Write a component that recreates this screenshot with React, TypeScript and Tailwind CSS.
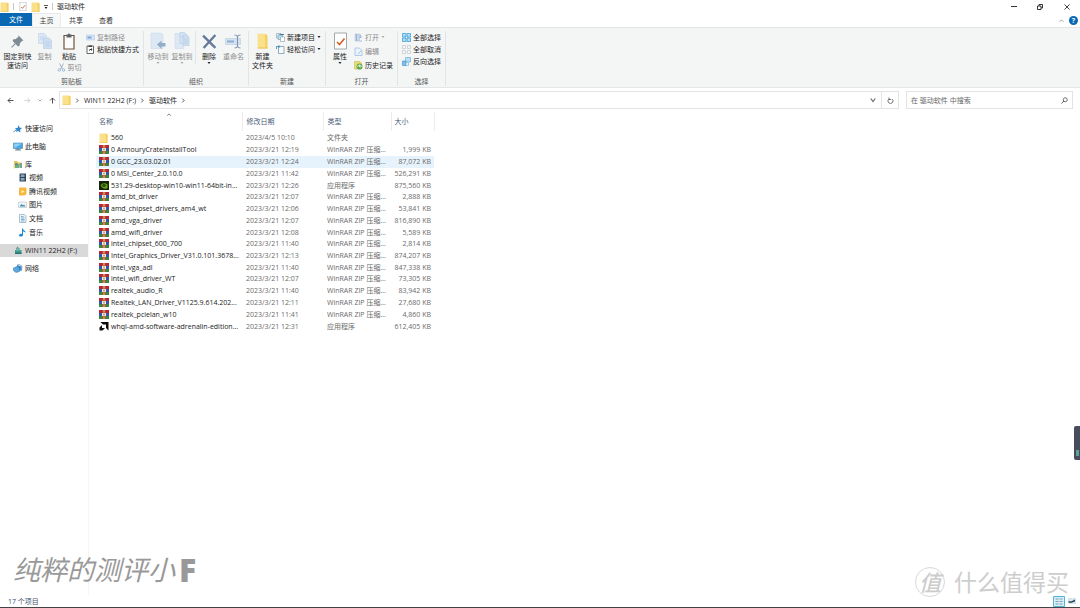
import React from "react";

type Kind = "folder" | "rar" | "nvidia" | "amd";
type FileRow = { name: string; date: string; type: string; size: string; kind: Kind };

const ZIP = "WinRAR ZIP 压缩...";
const rar = (name: string, time: string, size: string): FileRow => ({
  name,
  date: `2023/3/21 ${time}`,
  type: ZIP,
  size: `${size} KB`,
  kind: "rar",
});

const files: FileRow[] = [
  { name: "560", date: "2023/4/5 10:10", type: "文件夹", size: "", kind: "folder" },
  rar("0 ArmouryCrateInstallTool", "12:19", "1,999"),
  rar("0 GCC_23.03.02.01", "12:24", "87,072"),
  rar("0 MSI_Center_2.0.10.0", "11:42", "526,291"),
  { name: "531.29-desktop-win10-win11-64bit-in...", date: "2023/3/21 12:26", type: "应用程序", size: "875,560 KB", kind: "nvidia" },
  rar("amd_bt_driver", "12:07", "2,888"),
  rar("amd_chipset_drivers_am4_wt", "12:06", "53,841"),
  rar("amd_vga_driver", "12:07", "816,890"),
  rar("amd_wifi_driver", "12:08", "5,589"),
  rar("intel_chipset_600_700", "11:40", "2,814"),
  rar("Intel_Graphics_Driver_V31.0.101.3678...", "12:13", "874,207"),
  rar("intel_vga_adl", "11:40", "847,338"),
  rar("intel_wifi_driver_WT", "12:07", "73,305"),
  rar("realtek_audio_R", "11:40", "83,942"),
  rar("Realtek_LAN_Driver_V1125.9.614.202...", "12:11", "27,680"),
  rar("realtek_pcielan_w10", "11:41", "4,860"),
  { name: "whql-amd-software-adrenalin-edition...", date: "2023/3/21 12:31", type: "应用程序", size: "612,405 KB", kind: "amd" },
];

function FolderIcon({ className = "h-[10px] w-[9px]" }: { className?: string }) {
  return (
    <svg viewBox="0 0 18 20" className={`shrink-0 ${className}`} preserveAspectRatio="none">
      <path d="M1 1h12l4 2v16H1z" fill="#fbe08a" />
      <path d="M13 1l4 2v16h-3z" fill="#f3cf62" />
      <path d="M1 18h16v1.5H1z" fill="#efc75a" />
    </svg>
  );
}

function RarIcon() {
  return (
    <svg viewBox="0 0 20 18" className="h-[9px] w-[10px] shrink-0">
      <path d="M0 0h20v6H0z" fill="#b4273b" />
      <path d="M0 6h20v6H0z" fill="#3157a8" />
      <path d="M0 12h20v6H0z" fill="#37863f" />
      <path d="M7 0h6v18H7z" fill="#c4523f" />
      <path d="M6 6h8v6H6z" fill="#f7e9d8" />
      <path d="M9 7h2v4H9z" fill="#9d6b50" />
      <path d="M9 0h2v5H9zM9 13h2v5H9z" fill="#e3b860" />
    </svg>
  );
}

function NvidiaIcon() {
  return (
    <svg viewBox="0 0 20 18" className="h-[9px] w-[10px] shrink-0">
      <path d="M0 0h20v18H0z" fill="#17240c" />
      <path d="M3 9c3-5 9-6 14-2v7c-5 3-11 1-14-5z" fill="#67a714" />
      <path d="M6 9c2-3 5-3 8 0-2 3-5 3-8 0z" fill="none" stroke="#17240c" strokeWidth="1.5" />
      <circle cx="10" cy="9" r="1.4" fill="#17240c" />
    </svg>
  );
}

function AmdIcon() {
  return (
    <svg viewBox="0 0 20 18" className="h-[9px] w-[10px] shrink-0">
      <path d="M3 0h16v17l-5-5V5H8z" fill="#0b0b0b" />
      <path d="M1 11l5-5v6h6l-5 5H1z" fill="#0b0b0b" />
    </svg>
  );
}

function FileIcon({ kind }: { kind: Kind }) {
  if (kind === "folder") return <FolderIcon />;
  if (kind === "rar") return <RarIcon />;
  if (kind === "nvidia") return <NvidiaIcon />;
  return <AmdIcon />;
}

function Caret({ color = "#222" }: { color?: string }) {
  return (
    <svg viewBox="0 0 6 4" className="h-[2px] w-[4px] shrink-0">
      <path d="M0 0h6L3 4z" fill={color} />
    </svg>
  );
}

function Chevron({ className = "h-[5px] w-[5px]", d = "M2 1l3 3-3 3", color = "#444" }: { className?: string; d?: string; color?: string }) {
  return (
    <svg viewBox="0 0 8 8" className={`shrink-0 ${className}`}>
      <path d={d} fill="none" stroke={color} strokeWidth="1.5" />
    </svg>
  );
}

function PinIcon() {
  return (
    <svg viewBox="0 0 24 24" className="h-[13px] w-[13px]">
      <path d="M14 1l9 9-3 1-4 5 0 4-3 1-10-10 1-3 4 0 5-4z" fill="#7e8a94" />
      <path d="M8 16l-7 7" stroke="#7e8a94" strokeWidth="2" />
    </svg>
  );
}

function CopyIcon() {
  return (
    <svg viewBox="0 0 28 32" className="h-[16px] w-[14px]">
      <path d="M1 1h11l5 5v15H1z" fill="#dbe7f5" stroke="#b3c9e2" />
      <path d="M11 10h11l5 5v16H11z" fill="#cfdff1" stroke="#a9c2df" />
      <path d="M4 8h9M4 12h6M14 18h10M14 22h10M14 26h10" stroke="#aac3e0" />
    </svg>
  );
}

function PasteIcon() {
  return (
    <svg viewBox="0 0 24 34" className="h-[17px] w-[12px]">
      <path d="M2 5h20v27H2z" fill="#fbfbfb" stroke="#6f5137" strokeWidth="2.4" />
      <path d="M7 3h3c0-3 4-3 4 0h3v6H7z" fill="#59626c" />
    </svg>
  );
}

function MoveIcon() {
  return (
    <svg viewBox="0 0 32 36" className="h-[18px] w-[16px]">
      <path d="M2 2h19l5 3v28H2z" fill="#dce8f4" stroke="#c4d5e6" />
      <path d="M14 25l9-8v5h8v7h-8v5z" fill="#93adc9" />
    </svg>
  );
}

function CopyToIcon() {
  return (
    <svg viewBox="0 0 32 36" className="h-[18px] w-[16px]">
      <path d="M2 3h17v30H2z" fill="#dce8f4" stroke="#c4d5e6" />
      <path d="M12 1h9l4 4v18H12z" fill="#d6e4f3" stroke="#a9c2df" />
      <path d="M18 6h8l4 4v17H18z" fill="#d0dff0" stroke="#a9c2df" />
      <path d="M20 14h8M20 18h8M20 22h8M14 10h4" stroke="#a9c2df" />
    </svg>
  );
}

function DeleteIcon() {
  return (
    <svg viewBox="0 0 28 28" className="h-[15px] w-[15px]">
      <path d="M2 3l23 23M25 2L3 26" stroke="#65799a" strokeWidth="4.4" />
    </svg>
  );
}

function RenameIcon() {
  return (
    <svg viewBox="0 0 34 30" className="h-[15px] w-[17px]">
      <path d="M1 9h30v12H1z" fill="#d5e2f0" stroke="#b0c5dc" />
      <path d="M4 13h14v4H4z" fill="#8fadd0" />
      <path d="M19 2c3 0 5 1 6 3 1-2 3-3 6-3M25 5v20M19 28c3 0 5-1 6-3 1 2 3 3 6 3" fill="none" stroke="#7f97b3" strokeWidth="2.4" />
    </svg>
  );
}

function CheckPage({ className = "h-[18px] w-[13px]" }: { className?: string }) {
  return (
    <svg viewBox="0 0 26 34" className={className}>
      <path d="M1 1h24v32H1z" fill="#fff" stroke="#8e9499" strokeWidth="1.6" />
      <path d="M6 19l5 5 10-12" fill="none" stroke="#d7622c" strokeWidth="3.4" />
    </svg>
  );
}

function SmallIcon({ children }: { children: React.ReactNode }) {
  return (
    <svg viewBox="0 0 18 18" className="h-[9px] w-[9px] shrink-0">
      {children}
    </svg>
  );
}

function BigButton({ icon, lines, muted, arrow, width }: { icon: React.ReactNode; lines: string[]; muted?: boolean; arrow?: boolean; width: string }) {
  return (
    <button className={`flex shrink-0 flex-col items-center ${width} ${muted ? "text-[#8a8a8a]" : "text-[#222]"}`}>
      <span className="flex h-[20px] items-center justify-center">{icon}</span>
      <span className="mt-px flex flex-col items-center">
        {lines.map((line) => (
          <span key={line} className="h-[9px] leading-[9px]">{line}</span>
        ))}
      </span>
      {arrow && <span className="mt-px flex"><Caret color={muted ? "#aaa" : "#222"} /></span>}
    </button>
  );
}

function SmallButton({ icon, label, muted, arrow }: { icon: React.ReactNode; label: string; muted?: boolean; arrow?: boolean }) {
  return (
    <button className={`flex h-[12px] items-center gap-[2px] ${muted ? "text-[#8a8a8a]" : "text-[#222]"}`}>
      {icon}
      <span>{label}</span>
      {arrow && <Caret color={muted ? "#aaa" : "#222"} />}
    </button>
  );
}

function Group({ title, width, children }: { title: string; width: string; children: React.ReactNode }) {
  return (
    <section aria-label={title} className={`flex shrink-0 flex-col border-r border-[#e2e4e5] ${width}`}>
      <div className="flex h-[46px] items-start">{children}</div>
      <h2 className="text-center leading-[9px] text-[#555]">{title}</h2>
    </section>
  );
}

function Ribbon() {
  return (
    <div className="flex h-[61px] shrink-0 border-y border-[#e4e5e6] bg-[#f4f6f6] pt-[3px] pb-px">
      <Group title="剪贴板" width="w-[144px]">
        <BigButton width="w-[35px]" icon={<PinIcon />} lines={["固定到快", "速访问"]} />
        <BigButton width="w-[19px]" icon={<CopyIcon />} lines={["复制"]} muted />
        <div className="flex w-[30px] flex-col items-center">
          <BigButton width="w-[28px]" icon={<PasteIcon />} lines={["粘贴"]} />
          <SmallButton
            muted
            label="剪切"
            icon={<SmallIcon><path d="M5 1l6 11M13 1L7 12" stroke="#8da0b5" strokeWidth="1.6" /><circle cx="4.5" cy="14" r="2.5" fill="none" stroke="#8fb0dc" strokeWidth="1.6" /><circle cx="13" cy="14" r="2.5" fill="none" stroke="#8fb0dc" strokeWidth="1.6" /></SmallIcon>}
          />
        </div>
        <div className="ml-[2px] flex flex-col">
          <SmallButton
            muted
            label="复制路径"
            icon={<SmallIcon><path d="M1 4h16v10H1z" fill="#d7e4f4" stroke="#a9c2df" /><path d="M3 7h8v4H3z" fill="#7ea4da" /></SmallIcon>}
          />
          <SmallButton
            label="粘贴快捷方式"
            icon={<SmallIcon><path d="M2 2h13v15H2z" fill="#fff" stroke="#555" strokeWidth="1.8" /><path d="M5 1h7v3H5z" fill="#444" /><path d="M6 13c0-4 1-5 4-5V6l3 3-3 3v-2c-2 0-3 1-4 3z" fill="#333" /></SmallIcon>}
          />
        </div>
      </Group>

      <Group title="组织" width="w-[105px]">
        <div className="flex pl-[2px]">
          <BigButton width="w-[24px]" icon={<MoveIcon />} lines={["移动到"]} muted arrow />
          <BigButton width="w-[24px]" icon={<CopyToIcon />} lines={["复制到"]} muted arrow />
        </div>
        <div className="ml-px flex border-l border-[#e2e4e5] pl-px">
          <BigButton width="w-[24px]" icon={<DeleteIcon />} lines={["删除"]} arrow />
          <BigButton width="w-[25px]" icon={<RenameIcon />} lines={["重命名"]} muted />
        </div>
      </Group>

      <Group title="新建" width="w-[77px]">
        <BigButton width="w-[27px]" icon={<FolderIcon className="h-[16px] w-[11px]" />} lines={["新建", "文件夹"]} />
        <div className="flex flex-col">
          <SmallButton
            arrow
            label="新建项目"
            icon={<SmallIcon><path d="M1 1h9v9H1z" fill="#e3eef5" stroke="#6a8da3" /><path d="M4 4h9v9H4z" fill="#bfe0ef" stroke="#6a8da3" /><path d="M9 8h8v9H9z" fill="#fff" stroke="#6a8da3" /><path d="M7 2h9v2H7z" fill="#49799a" /></SmallIcon>}
          />
          <SmallButton
            arrow
            label="轻松访问"
            icon={<SmallIcon><path d="M5 3h11v14H5z" fill="#f4fafd" stroke="#6a8da3" strokeWidth="1.4" /><path d="M1 8V3h6M5 1l3 2-3 3" fill="none" stroke="#3587b5" strokeWidth="1.6" /></SmallIcon>}
          />
        </div>
      </Group>

      <Group title="打开" width="w-[72px]">
        <BigButton width="w-[28px]" icon={<CheckPage />} lines={["属性"]} arrow />
        <div className="flex flex-col gap-[2px]">
          <SmallButton
            muted
            arrow
            label="打开"
            icon={<SmallIcon><path d="M2 2h9v14H2z" fill="#cad8ec" stroke="#a6bbd8" /><path d="M5 2v14M13 3v6M11 7l2 3 3-3M11 16h5" fill="none" stroke="#8aa4cb" strokeWidth="1.4" /></SmallIcon>}
          />
          <SmallButton
            muted
            label="编辑"
            icon={<SmallIcon><path d="M2 2h9l5 5v10H2z" fill="#eaf2fc" stroke="#9ebbe2" strokeWidth="1.5" /><path d="M8 14l7-7" stroke="#a4c1e6" strokeWidth="2" /></SmallIcon>}
          />
          <SmallButton
            label="历史记录"
            icon={<SmallIcon><path d="M1 1h11l3 3v12H1z" fill="#e8df70" stroke="#b8b04e" /><circle cx="11" cy="11" r="6" fill="#5aa64a" /><path d="M7 12a4 4 0 018 0M11 8v4h3" fill="none" stroke="#fff" strokeWidth="1.4" /></SmallIcon>}
          />
        </div>
      </Group>

      <Group title="选择" width="w-[48px]">
        <div className="flex flex-col pl-[4px]">
          <SmallButton
            label="全部选择"
            icon={<SmallIcon><path d="M1 1h7v7H1zM10 1h7v7h-7zM1 10h7v7H1zM10 10h7v7h-7z" fill="#b5def5" stroke="#3f9fd5" strokeWidth="1.6" /></SmallIcon>}
          />
          <SmallButton
            label="全部取消"
            icon={<SmallIcon><path d="M1 1h6v6H1zM11 1h6v6h-6zM1 11h6v6H1zM11 11h6v6h-6z" fill="#f8f8f8" stroke="#b5bcc2" strokeWidth="1.2" /></SmallIcon>}
          />
          <SmallButton
            label="反向选择"
            icon={<SmallIcon><path d="M7 1h10v9H7z" fill="#b9dff5" stroke="#5daada" strokeWidth="1.2" /><path d="M1 8h7v9H1z" fill="#7fc0ea" stroke="#388fc7" strokeWidth="1.2" /><path d="M8 11h5v6H8z" fill="#e5f3fb" stroke="#72b4dd" strokeWidth="1.2" /></SmallIcon>}
          />
        </div>
      </Group>
    </div>
  );
}

function TitleBar() {
  return (
    <header className="flex h-[13px] shrink-0 items-center justify-between">
      <div className="flex items-center text-[#222]">
        <FolderIcon />
        <span className="mx-[4px] h-[7px] w-px bg-[#c8c8c8]" />
        <button aria-label="属性" className="ml-px"><CheckPage className="h-[9px] w-[8px]" /></button>
        <button aria-label="新建文件夹" className="ml-[4px]"><FolderIcon /></button>
        <button aria-label="自定义快速访问工具栏" className="ml-[4px] flex flex-col items-center gap-px">
          <span className="h-px w-[4px] bg-[#555]" />
          <Caret />
        </button>
        <span className="mx-[4px] h-[7px] w-px bg-[#c8c8c8]" />
        <h1>驱动软件</h1>
      </div>
      <div className="flex h-full items-center">
        <button aria-label="最小化" className="flex w-[26px] justify-center"><span className="h-px w-[6px] bg-[#333]" /></button>
        <button aria-label="还原" className="flex w-[26px] justify-center">
          <svg viewBox="0 0 12 12" className="h-[6px] w-[6px]"><path d="M1 4h7v7H1zM4 4V1h7v7H8" fill="none" stroke="#222" strokeWidth="1.8" /></svg>
        </button>
        <button aria-label="关闭" className="flex w-[27px] justify-center">
          <svg viewBox="0 0 12 12" className="h-[6px] w-[6px]"><path d="M1 1l10 10M11 1L1 11" stroke="#222" strokeWidth="1.7" /></svg>
        </button>
      </div>
    </header>
  );
}

function TabBar() {
  return (
    <div className="flex h-[14px] shrink-0 items-center justify-between pr-[2px]">
      <div className="flex h-full">
        <button className="h-[13px] w-[32px] bg-[#0a67b3] text-white">文件</button>
        <button className="w-[29px] border-x border-t border-[#e9eaeb] bg-[#f7f8f8] text-[#444]">主页</button>
        <button className="w-[30px] text-[#333]">共享</button>
        <button className="w-[30px] text-[#333]">查看</button>
      </div>
      <div className="flex items-center gap-[5px]">
        <button aria-label="最小化功能区"><Chevron d="M1 6l3-3 3 3" color="#999" /></button>
        <button aria-label="帮助" className="flex h-[9px] w-[9px] items-center justify-center rounded-full bg-[#0a67b3] leading-none font-bold text-white">?</button>
      </div>
    </div>
  );
}

function Arrow({ d, color = "#333" }: { d: string; color?: string }) {
  return (
    <svg viewBox="0 0 14 14" className="h-[7px] w-[7px]">
      <path d={d} fill="none" stroke={color} strokeWidth="1.7" />
    </svg>
  );
}

function AddressBar() {
  return (
    <div className="flex h-[24px] shrink-0 items-center px-[7px]">
      <div className="flex w-[52px] items-center">
        <button aria-label="后退"><Arrow d="M13 7H2M7 2L2 7l5 5" /></button>
        <button aria-label="前进" className="ml-[10px]"><Arrow d="M1 7h11M7 2l5 5-5 5" color="#ccc" /></button>
        <button aria-label="最近位置" className="ml-[7px]"><Chevron className="h-[4px] w-[4px]" d="M1 3l3 3 3-3" color="#888" /></button>
        <button aria-label="上移" className="ml-[7px]"><Arrow d="M7 13V2M2 7l5-5 5 5" /></button>
      </div>
      <div className="flex h-[18px] flex-1 items-center border border-[#e3e3e3] text-[#222]">
        <nav aria-label="路径" className="flex flex-1 items-center gap-[4px] pl-[2px]">
          <FolderIcon />
          <Chevron />
          <a href="#drive">WIN11 22H2 (F:)</a>
          <Chevron />
          <a href="#folder">驱动软件</a>
          <Chevron />
        </nav>
        <button aria-label="以前的位置" className="flex w-[17px] justify-center"><Chevron className="h-[6px] w-[6px]" d="M1 2l3 4 3-4" color="#666" /></button>
        <button aria-label="刷新" className="flex h-full w-[17px] items-center justify-center border-l border-[#e3e3e3]">
          <svg viewBox="0 0 14 14" className="h-[7px] w-[7px]"><path d="M4 4a5 5 0 106 0M4 1v4h4" fill="none" stroke="#444" strokeWidth="1.5" /></svg>
        </button>
      </div>
      <label className="ml-[7px] flex h-[18px] w-[167px] items-center border border-[#e3e3e3] px-[4px]">
        <input aria-label="搜索" type="text" placeholder="在 驱动软件 中搜索" className="min-w-0 flex-1 bg-transparent outline-none placeholder:text-[#666]" />
        <svg viewBox="0 0 14 14" className="h-[7px] w-[7px]"><circle cx="8.5" cy="5.5" r="4" fill="none" stroke="#444" strokeWidth="1.5" /><path d="M6 8l-5 5" stroke="#444" strokeWidth="1.7" /></svg>
      </label>
    </div>
  );
}

const libraries: { label: string; icon: React.ReactNode }[] = [
  { label: "视频", icon: <><path d="M3 1h13v16H3z" fill="#31475b" /><path d="M6 3h7v5H6zM6 10h7v5H6z" fill="#8ba7bd" /><path d="M4 2v14" stroke="#d5dde5" strokeDasharray="2 2" /></> },
  { label: "腾讯视频", icon: <><path d="M2 3q0-2 2-2h11q2 0 2 2v8q0 6-6 6H4q-2 0-2-2z" fill="#f6b73c" /><path d="M7 6l6 3-6 4z" fill="#fff0b8" /></> },
  { label: "图片", icon: <><path d="M1 4h16v11H1z" fill="#edf4f8" stroke="#aab8c2" /><path d="M3 13l4-5 3 3 2-2 3 4z" fill="#4289b0" /></> },
  { label: "文档", icon: <><path d="M3 1h10l3 3v13H3z" fill="#eaf4fa" stroke="#84a4b9" strokeWidth="1.3" /><path d="M6 5h5M6 8h7M6 11h7M6 14h7" stroke="#4c8db5" strokeWidth="1.3" /></> },
  { label: "音乐", icon: <path d="M8 1h2c0 4 6 4 5 9-1-2-3-3-5-3v7c0 4-8 4-8 1s4-4 6-3z" fill="#1e8bd0" /> },
];

function NavItem({ icon, label, selected }: { icon: React.ReactNode; label: string; selected?: boolean }) {
  return (
    <a href="#nav" className={`flex h-[13px] items-center gap-[2px] pl-[13px] ${selected ? "bg-[#d9d9d9]" : ""}`}>
      <svg viewBox="0 0 20 18" className="h-[9px] w-[10px] shrink-0">{icon}</svg>
      <span>{label}</span>
    </a>
  );
}

function Sidebar() {
  return (
    <nav aria-label="导航窗格" className="flex w-[89px] shrink-0 flex-col gap-[5px] border-r border-[#f5f5f5] pt-[10px] text-[#222]">
      <NavItem label="快速访问" icon={<><path d="M11 2l2 5 5 1-4 4 1 5-5-3-4 2 1-4-3-4 5 0z" fill="#2f87cf" /><path d="M1 16l6-5" stroke="#5c8fb7" strokeWidth="2" /></>} />
      <NavItem label="此电脑" icon={<><path d="M1 2h18v11H1z" fill="#48a9e6" stroke="#3a6d91" /><path d="M2 3h16L3 12z" fill="#8bd2f7" /><path d="M7 13h6v2h3v2H4v-2h3z" fill="#6a8ba1" /></>} />
      <div>
        <NavItem label="库" icon={<><path d="M2 2h6l2 3h7v9H2z" fill="#eac04f" /><path d="M4 7h5v9H4zM9 8h4v8H9zM14 6h4v10h-4z" fill="#6cae8c" /><path d="M4 7h5v3H4z" fill="#3d7faa" /><path d="M1 7h3v10H1z" fill="#f5d97c" /></>} />
        <ul className="grid h-[68px] auto-rows-fr items-center">
          {libraries.map((c) => (
            <li key={c.label}>
              <a href="#library" className="flex items-center gap-[2px] pl-[18px]">
                <SmallIcon>{c.icon}</SmallIcon>
                <span>{c.label}</span>
              </a>
            </li>
          ))}
        </ul>
      </div>
      <NavItem selected label="WIN11 22H2 (F:)" icon={<><path d="M4 8h13v8H4z" fill="#3f9f8c" /><path d="M6 4h8v5H6z" fill="#7fb8b0" /><path d="M9 1l3 4H6z" fill="#5a8f88" /><path d="M4 13h13v3H4z" fill="#2d6f80" /></>} />
      <NavItem label="网络" icon={<><path d="M8 2l9 3v9l-9-3z" fill="#3a8ad0" /><path d="M1 8l7-3 5 4v6l-7 2-5-4z" fill="#5aaae2" stroke="#2f6ea4" /><path d="M8 2l4-1 6 3-1 9" fill="none" stroke="#2f6ea4" /></>} />
    </nav>
  );
}

function FileList() {
  return (
    <main className="flex-1 overflow-hidden pl-[7px]">
      <table className="h-[220px] w-[338px] table-fixed border-collapse text-left">
        <colgroup>
          <col className="w-[146px]" />
          <col className="w-[81px]" />
          <col className="w-[68px]" />
          <col className="w-[43px]" />
        </colgroup>
        <thead>
          <tr className="h-[19px] text-[#4c607a]">
            <th className="relative border-r border-[#ececec] py-0 pr-0 pl-[3px] font-normal">
              名称
              <span className="absolute top-0 left-1/2 -translate-x-1/2"><Chevron d="M1 6l3-3 3 3" color="#777" /></span>
            </th>
            <th className="border-r border-[#ececec] py-0 pr-0 pl-[4px] font-normal">修改日期</th>
            <th className="border-r border-[#ececec] py-0 pr-0 pl-[4px] font-normal">类型</th>
            <th className="border-r border-[#ececec] py-0 pr-0 pl-[3px] font-normal">大小</th>
          </tr>
        </thead>
        <tbody>
          {files.map((f, i) => (
            <tr key={f.name} className={i === 2 ? "bg-[#e6f3fc]" : ""}>
              <td className="overflow-hidden p-0 pl-[3px] text-[#222]">
                <div className="flex items-center gap-[2px] whitespace-nowrap">
                  <span className="flex w-[10px] shrink-0"><FileIcon kind={f.kind} /></span>
                  <span>{f.name}</span>
                </div>
              </td>
              <td className="p-0 pl-[4px] whitespace-nowrap text-[#6b6b6b]">{f.date}</td>
              <td className="p-0 pl-[4px] whitespace-nowrap text-[#6b6b6b]">{f.type}</td>
              <td className="p-0 pr-[3px] text-right whitespace-nowrap text-[#6b6b6b]">{f.size}</td>
            </tr>
          ))}
        </tbody>
      </table>
    </main>
  );
}

function StatusBar() {
  return (
    <footer className="flex h-[13px] shrink-0 items-center justify-between border-b border-[#444] pr-[4px] pl-[8px] text-[#40536b]">
      <span>17 个项目</span>
      <div className="flex items-center gap-[3px]">
        <button aria-label="详细信息">
          <svg viewBox="0 0 24 22" className="h-[11px] w-[12px]"><path d="M1 1h22v20H1z" fill="#d5eef8" stroke="#58b4d4" strokeWidth="2" /><path d="M5 6h6M13 6h6M5 11h6M13 11h6M5 16h6M13 16h6" stroke="#7197a8" strokeWidth="1.8" /></svg>
        </button>
        <button aria-label="大图标">
          <svg viewBox="0 0 16 12" className="h-[6px] w-[8px]"><path d="M0 0h16v12H0z" fill="#d5e6f0" /><path d="M1 6l5 1 8-4v4l-8 3-5-1z" fill="#31475b" /></svg>
        </button>
      </div>
    </footer>
  );
}

export default function App() {
  return (
    <div className="relative flex h-screen flex-col overflow-hidden bg-white font-['Open_Sans','Noto_Sans_CJK_SC',sans-serif] text-[7px] leading-[9px]">
      <TitleBar />
      <TabBar />
      <Ribbon />
      <AddressBar />
      <div className="flex min-h-0 flex-1">
        <Sidebar />
        <FileList />
      </div>
      <StatusBar />

      <div className="pointer-events-none absolute bottom-[22px] left-[13px] flex items-center gap-[4px] text-[27px] leading-[32px] text-[#999]">
        <span className="italic">纯粹的测评小</span>
        <span className="text-[32px] font-extrabold">F</span>
      </div>
      <div className="pointer-events-none absolute right-[11px] bottom-[11px] flex items-center gap-[9px] text-[#cdcdcd]">
        <span className="flex h-[30px] w-[30px] items-center justify-center rounded-full border border-[#d8d8d8] text-[22px] leading-[28px] font-medium italic">值</span>
        <span className="text-[23px] leading-[28px]">什么值得买</span>
      </div>
      <div className="absolute top-[426px] right-0 flex h-[34px] w-[6px] items-end justify-center rounded-l-[2px] bg-[#474d5c] pb-[4px]">
        <span className="h-[6px] w-[3px] bg-[#5fa394]" />
      </div>
    </div>
  );
}
